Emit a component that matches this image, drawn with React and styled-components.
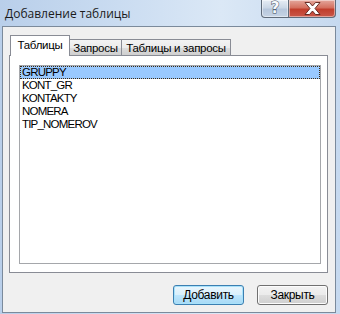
import React from "react";
import styled, { createGlobalStyle } from "styled-components";

const GlobalStyle = createGlobalStyle`
	html, body {
		margin: 0;
		padding: 0;
		background: #ffffff;
	}
	* {
		box-sizing: border-box;
	}
`;

const Window = styled.div`
	width: 340px;
	height: 314px;
	display: flex;
	flex-direction: column;
	padding: 0 4px 1px 2px;
	background: linear-gradient(to right, #b9cfea 0%, #cadcf1 35%, #dbe8f6 65%, #c6d9ef 100%);
	font-family: "Liberation Sans", Arial, sans-serif;
`;

const TitleBar = styled.div`
	height: 26px;
	display: flex;
	justify-content: space-between;
	align-items: flex-start;
`;

const Title = styled.div`
	padding: 5px 0 0 3px;
	font-family: "Open Sans", "Liberation Sans", sans-serif;
	font-size: 12px;
	color: #1b1b1b;
`;

const Controls = styled.div`
	display: flex;
`;

const CaptionButton = styled.div`
	width: ${(p) => p.$w}px;
	height: 18px;
	display: flex;
	align-items: center;
	justify-content: center;
	border: 1px solid #5f6b7a;
	border-top: none;
	background: ${(p) =>
		p.$close
			? "linear-gradient(to bottom, #e4a89d 0%, #d4705f 45%, #c13e2c 55%, #c9584a 100%)"
			: "linear-gradient(to bottom, #e6edf5 0%, #cbd7e6 45%, #b7c7dc 55%, #c6d4e5 100%)"};
	border-radius: ${(p) => (p.$close ? "0 0 4px 0" : "0 0 0 4px")};
	margin-left: ${(p) => (p.$close ? "-1px" : "0")};
	box-shadow: inset 0 0 0 1px rgba(255, 255, 255, 0.45);
`;

const HelpGlyph = styled.span`
	font-family: "DejaVu Sans", "Liberation Sans", sans-serif;
	font-weight: bold;
	font-size: 15px;
	line-height: 1;
	margin-top: -1px;
	color: #f7f9fc;
	-webkit-text-stroke: 1px #3e4c60;
	paint-order: stroke fill;
`;

const Client = styled.div`
	flex: 1;
	display: flex;
	flex-direction: column;
	border: 1px solid #7b8a9b;
	background: #f0f0f0;
	padding: 8px 7px 0 6px;
`;

const TabStrip = styled.div`
	display: flex;
	align-items: flex-end;
	height: 21px;
	margin-bottom: -1px;
	padding-left: 1px;
	position: relative;
	z-index: 1;
`;

const Tab = styled.div`
	width: ${(p) => p.$w}px;
	height: ${(p) => (p.$active ? 21 : 17)}px;
	margin-left: ${(p) => (p.$first ? "0" : "-1px")};
	border: 1px solid #898c95;
	border-bottom: ${(p) => (p.$active ? "none" : "1px solid #898c95")};
	background: ${(p) =>
		p.$active ? "#ffffff" : "linear-gradient(to bottom, #f3f3f3 0%, #ebebeb 50%, #dddddd 51%, #cfcfcf 100%)"};
	font-size: 11.5px;
	letter-spacing: -0.3px;
	color: #000000;
	display: flex;
	align-items: ${(p) => (p.$active ? "flex-start" : "center")};
	justify-content: center;
	padding-top: ${(p) => (p.$active ? "3px" : "0")};
	white-space: nowrap;
	position: relative;
	z-index: ${(p) => (p.$active ? 2 : 1)};
`;

const Panel = styled.div`
	height: 218px;
	border: 1px solid #898c95;
	background: #ffffff;
	padding: 9px 6px 8px 9px;
	display: flex;
`;

const ListBox = styled.div`
	flex: 1;
	border: 1px solid #a5a7ab;
	background: #ffffff;
	display: flex;
	flex-direction: column;
`;

const ListItem = styled.div`
	height: 13px;
	line-height: 13px;
	padding-left: 2px;
	font-size: 11.5px;
	letter-spacing: -0.8px;
	color: #000000;
	background: ${(p) => (p.$selected ? "#99c9ff" : "transparent")};
	outline: ${(p) => (p.$selected ? "1px dotted #3d2a10" : "none")};
	outline-offset: -1px;
`;

const ButtonRow = styled.div`
	display: flex;
	justify-content: flex-end;
	gap: 13px;
	margin-top: 12px;
`;

const Button = styled.button`
	width: 71px;
	height: 20px;
	padding: 0;
	font-family: "Liberation Sans", Arial, sans-serif;
	font-size: 12px;
	letter-spacing: -0.3px;
	color: #000000;
	border-radius: 3px;
	border: 1px solid ${(p) => (p.$default ? "#3c7fb1" : "#707070")};
	background: ${(p) =>
		p.$default
			? "linear-gradient(to bottom, #eaf6fd 0%, #d9f0fc 50%, #bee6fd 51%, #a7d9f5 100%)"
			: "linear-gradient(to bottom, #f2f2f2 0%, #ebebeb 50%, #dddddd 51%, #cfcfcf 100%)"};
	box-shadow: inset 0 0 0 1px ${(p) => (p.$default ? "#a8e2fb" : "#fcfcfc")};
`;

const tabs = [
	{ label: "Таблицы", w: 60, active: true },
	{ label: "Запросы", w: 53 },
	{ label: "Таблицы и запросы", w: 110 },
];

const tables = ["GRUPPY", "KONT_GR", "KONTAKTY", "NOMERA", "TIP_NOMEROV"];

const App = () => {
	return (
		<>
			<GlobalStyle />
			<Window>
				<TitleBar>
					<Title>Добавление таблицы</Title>
					<Controls>
						<CaptionButton $w={28}>
							<HelpGlyph>?</HelpGlyph>
						</CaptionButton>
						<CaptionButton $w={48} $close>
							<svg width="17" height="13" viewBox="0 0 17 13">
								<path
									d="M1 0.5 H5.5 L8.5 4 L11.5 0.5 H16 L11 6.5 L16 12.5 H11.5 L8.5 9 L5.5 12.5 H1 L6 6.5 Z"
									fill="#ffffff"
									stroke="#5a1f18"
									strokeWidth="0.9"
									strokeLinejoin="round"
								/>
							</svg>
						</CaptionButton>
					</Controls>
				</TitleBar>
				<Client>
					<TabStrip>
						{tabs.map((t, i) => (
							<Tab key={t.label} $w={t.w} $active={t.active} $first={i === 0}>
								{t.label}
							</Tab>
						))}
					</TabStrip>
					<Panel>
						<ListBox>
							{tables.map((name, i) => (
								<ListItem key={name} $selected={i === 0}>
									{name}
								</ListItem>
							))}
						</ListBox>
					</Panel>
					<ButtonRow>
						<Button $default>Добавить</Button>
						<Button>Закрыть</Button>
					</ButtonRow>
				</Client>
			</Window>
		</>
	);
};

export default App;
